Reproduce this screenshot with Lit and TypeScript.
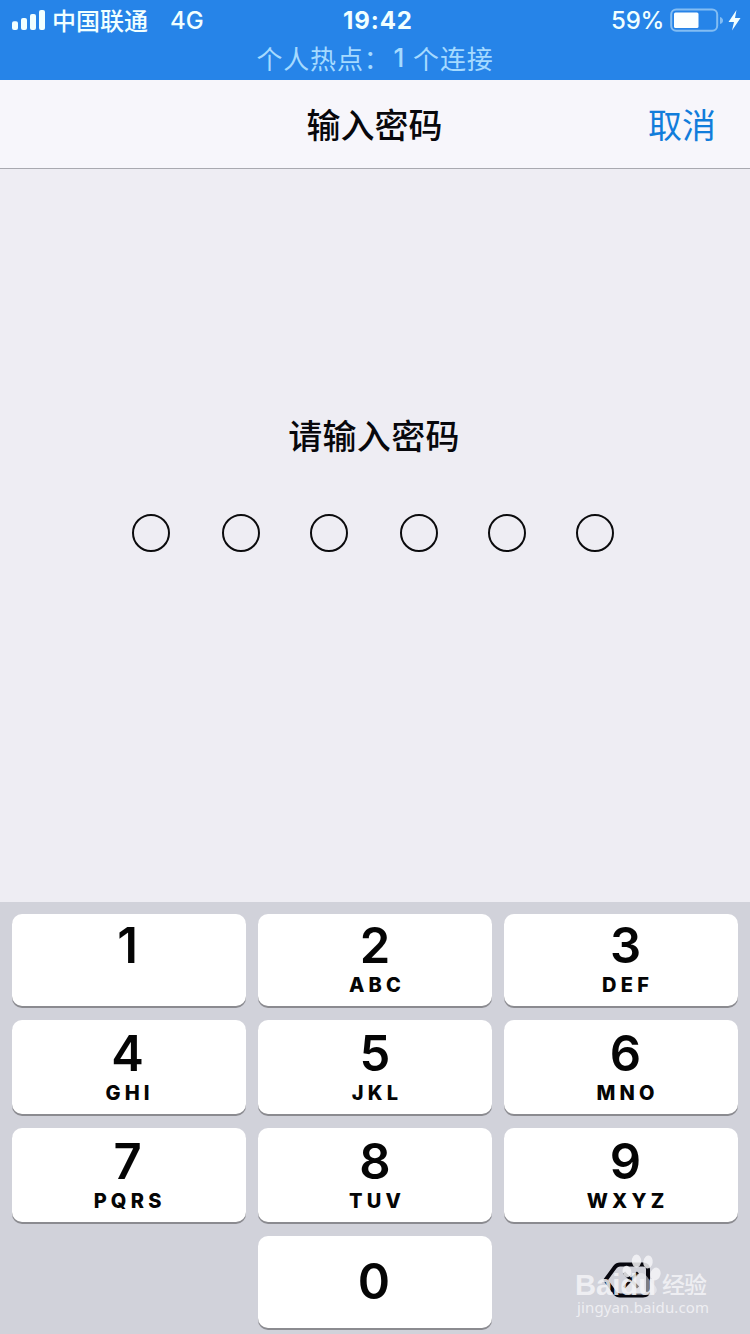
import { LitElement, html, css, svg, nothing } from "lit";
import { customElement, property } from "lit/decorators.js";

@customElement("status-bar")
class StatusBar extends LitElement {
  static styles = css`
    :host { display: block; height: 80px; background: #2684e8; color: #f1ffff; box-sizing: border-box; white-space: nowrap; }
    .row { display: grid; grid-template-columns: 1fr auto 1fr; align-items: center; height: 40px; padding: 0 9px 0 12px; }
    .left, .right { display: flex; align-items: center; height: 40px; }
    .right { justify-content: flex-end; gap: 6px; }
    .carrier { font-size: 24px; line-height: 40px; margin-left: 6px; padding-top: 3px; font-weight: 500; }
    .net { font-size: 24px; margin-left: 22px; font-weight: 500; padding-top: 1px; }
    .time { font-size: 24px; font-weight: 700; letter-spacing: 0.9px; padding: 1px 0 0 3px; }
    .pct { font-size: 24px; font-weight: 500; padding-top: 1px; letter-spacing: -0.3px; }
    .hotspot { display: flex; justify-content: center; align-items: center; height: 34px; font-size: 26px; color: #a5daff; letter-spacing: 0.8px; }
    .count { margin: 0 8px 0 3px; font-weight: 500; }
    svg { display: block; }
  `;
  render() {
    return html`
      <div class="row">
        <div class="left">
          <svg width="34" height="20" viewBox="0 0 34 20" fill="#f1ffff">
            <rect x="0" y="11.3" width="6" height="8.7" rx="2" />
            <rect x="9" y="8" width="6" height="12" rx="2" />
            <rect x="18" y="4" width="6" height="16" rx="2" />
            <rect x="27" y="0" width="6" height="20" rx="2" />
          </svg>
          <span class="carrier">中国联通</span><span class="net">4G</span>
        </div>
        <div class="time">19:42</div>
        <div class="right">
          <span class="pct">59%</span>
          <svg width="71" height="24" viewBox="0 0 71 24">
            <rect x="1.2" y="1.6" width="46" height="21.2" rx="5" fill="none" stroke="#83bdf3" stroke-width="2" />
            <rect x="4" y="4.500" width="24.500" height="15.500" rx="1.500" fill="#fbffff" />
            <path d="M50 9 Q53 10 53 12.500 Q53 15 50 16Z" fill="#83bdf3" />
            <path d="M66.500 2 L58.500 14 H64 L62 22.500 L70.500 10 H65Z" fill="#f1ffff" />
          </svg>
        </div>
      </div>
      <div class="hotspot"><span>个人热点：</span><span class="count">1</span><span>个连接</span></div>
    `;
  }
}

@customElement("key-button")
class KeyButton extends LitElement {
  @property() digit = "";
  @property() letters = "";
  static styles = css`
    :host { display: block; }
    .key { height: 100%; box-sizing: border-box; background: #fff; border-radius: 10px; box-shadow: 0 2px 0 #8b8b90; display: flex; flex-direction: column; align-items: center; color: #050505; padding-top: var(--key-drop, 0); }
    .digit { font-size: 49px; line-height: 60px; font-weight: 600; margin-top: 2px; }
    .letters { font-size: 20px; line-height: 20px; font-weight: 800; letter-spacing: 4.2px; margin-right: -4.2px; margin-top: -1px; }
    .first { padding-right: 3px; }
    .last { padding-left: 9px; }
    .solo { justify-content: center; }
    .solo .digit { margin: 0 2px 0 0; }
  `;
  render() {
    const n = Number(this.digit);
    const place = n === 0 ? "solo" : n % 3 === 1 ? "first" : n % 3 === 0 ? "last" : "";
    return html`<div class="key ${place}">
      <span class="digit">${this.digit}</span>
      ${this.letters ? html`<span class="letters">${this.letters}</span>` : nothing}
    </div>`;
  }
}

@customElement("site-mark")
class SiteMark extends LitElement {
  static styles = css`
    :host { display: block; }
    svg { display: block; }
    .brand { font: 700 30px "Liberation Sans", Arial, sans-serif; }
    .cn { font: 500 23px "Noto Sans CJK SC", sans-serif; }
    .url { font: 400 15px "Noto Sans", "DejaVu Sans", sans-serif; }
  `;
  render() {
    return html`<svg width="140" height="68" viewBox="0 0 140 68" fill="#f4f4f7" fill-opacity="0.85">
      ${svg`
      <ellipse cx="53" cy="17.500" rx="4.300" ry="5.700" transform="rotate(-15 53 17.500)" />
      <ellipse cx="62.500" cy="7" rx="4.700" ry="6.500" />
      <ellipse cx="74" cy="8" rx="4.700" ry="6.500" transform="rotate(8 74 8)" />
      <ellipse cx="81.500" cy="20" rx="5" ry="6.500" transform="rotate(15 81.500 20)" />
      <path d="M67 19 C61 19 59 27 54 31 C48 36 52 42 60 41 C65 40.500 69 40.500 74 41 C83 42 86 35 79 30 C74 26 73 19 67 19Z" fill-opacity="0.5" />
      `}
      <text class="brand" x="1" y="41" textLength="81" lengthAdjust="spacingAndGlyphs">Baidu</text>
      <text class="cn" x="88" y="39" textLength="45">经验</text>
      <text class="url" x="3" y="59" textLength="132">jingyan.baidu.com</text>
    </svg>`;
  }
}

@customElement("app-root")
class AppRoot extends LitElement {
  static styles = css`
    :host { display: flex; flex-direction: column; width: 750px; height: 1334px; overflow: hidden; position: relative; background: #eeedf3; font-family: Inter, "Noto Sans CJK SC", sans-serif; color: #08080c; }
    .nav { display: grid; grid-template-columns: 1fr auto 1fr; align-items: center; height: 89px; box-sizing: border-box; border-bottom: 1px solid #a9a9b0; background: #f7f6fb; padding: 3px 34px 0; font-size: 34px; line-height: 50px; }
    .title { grid-column: 2; font-weight: 500; margin-right: 1px; }
    .cancel { text-align: right; color: #117ddb; font-weight: 400; }
    .body { flex: 1; display: flex; flex-direction: column; align-items: center; padding-top: 243px; }
    .prompt { font-size: 34px; line-height: 50px; font-weight: 500; letter-spacing: 0.3px; margin-right: 2px; }
    .dots { display: grid; grid-template-columns: 90px 88px 90px 88px 88px 38px; margin-top: 52px; margin-right: 4px; }
    .dot { width: 38px; height: 38px; box-sizing: border-box; border: 2px solid #0b0b0d; border-radius: 50%; }
    .pad { height: 432px; box-sizing: border-box; background: #d1d2da; padding: 12px 12px 6px; display: grid; grid-template-columns: repeat(3, 234px); grid-template-rows: 92px 94px 94px 92px; column-gap: 12px; row-gap: 14px; }
    .tall { --key-drop: 2px; }
    .back { grid-column: 3; display: flex; align-items: center; padding: 0 0 4px 99px; }
    .mark { position: absolute; left: 574px; top: 1254px; }
  `;
  render() {
    const keys = [["1", ""], ["2", "ABC"], ["3", "DEF"], ["4", "GHI"], ["5", "JKL"], ["6", "MNO"], ["7", "PQRS"], ["8", "TUV"], ["9", "WXYZ"]];
    return html`
      <status-bar></status-bar>
      <div class="nav"><span class="title">输入密码</span><span class="cancel">取消</span></div>
      <div class="body">
        <div class="prompt">请输入密码</div>
        <div class="dots">${[0, 1, 2, 3, 4, 5].map(() => html`<span class="dot"></span>`)}</div>
      </div>
      <div class="pad">
        ${keys.map(([d, l], i) => html`<key-button class=${i > 2 ? "tall" : ""} .digit=${d} .letters=${l}></key-button>`)}
        <span></span>
        <key-button .digit=${"0"}></key-button>
        <div class="back">
          <svg width="48" height="36" viewBox="0 0 48 36" fill="none" stroke="#07070f" stroke-width="4" stroke-linejoin="round">
            <path d="M17 2.500 H40 Q45 2.500 45 7.500 V28.500 Q45 33.500 40 33.500 H17 Q14 33.500 12 31 L2.500 18 L12 5 Q14 2.500 17 2.500Z" />
            <path d="M21 10.500 L35 25.500 M35 10.500 L21 25.500" stroke-width="3" />
          </svg>
        </div>
      </div>
      <site-mark class="mark"></site-mark>
    `;
  }
}
